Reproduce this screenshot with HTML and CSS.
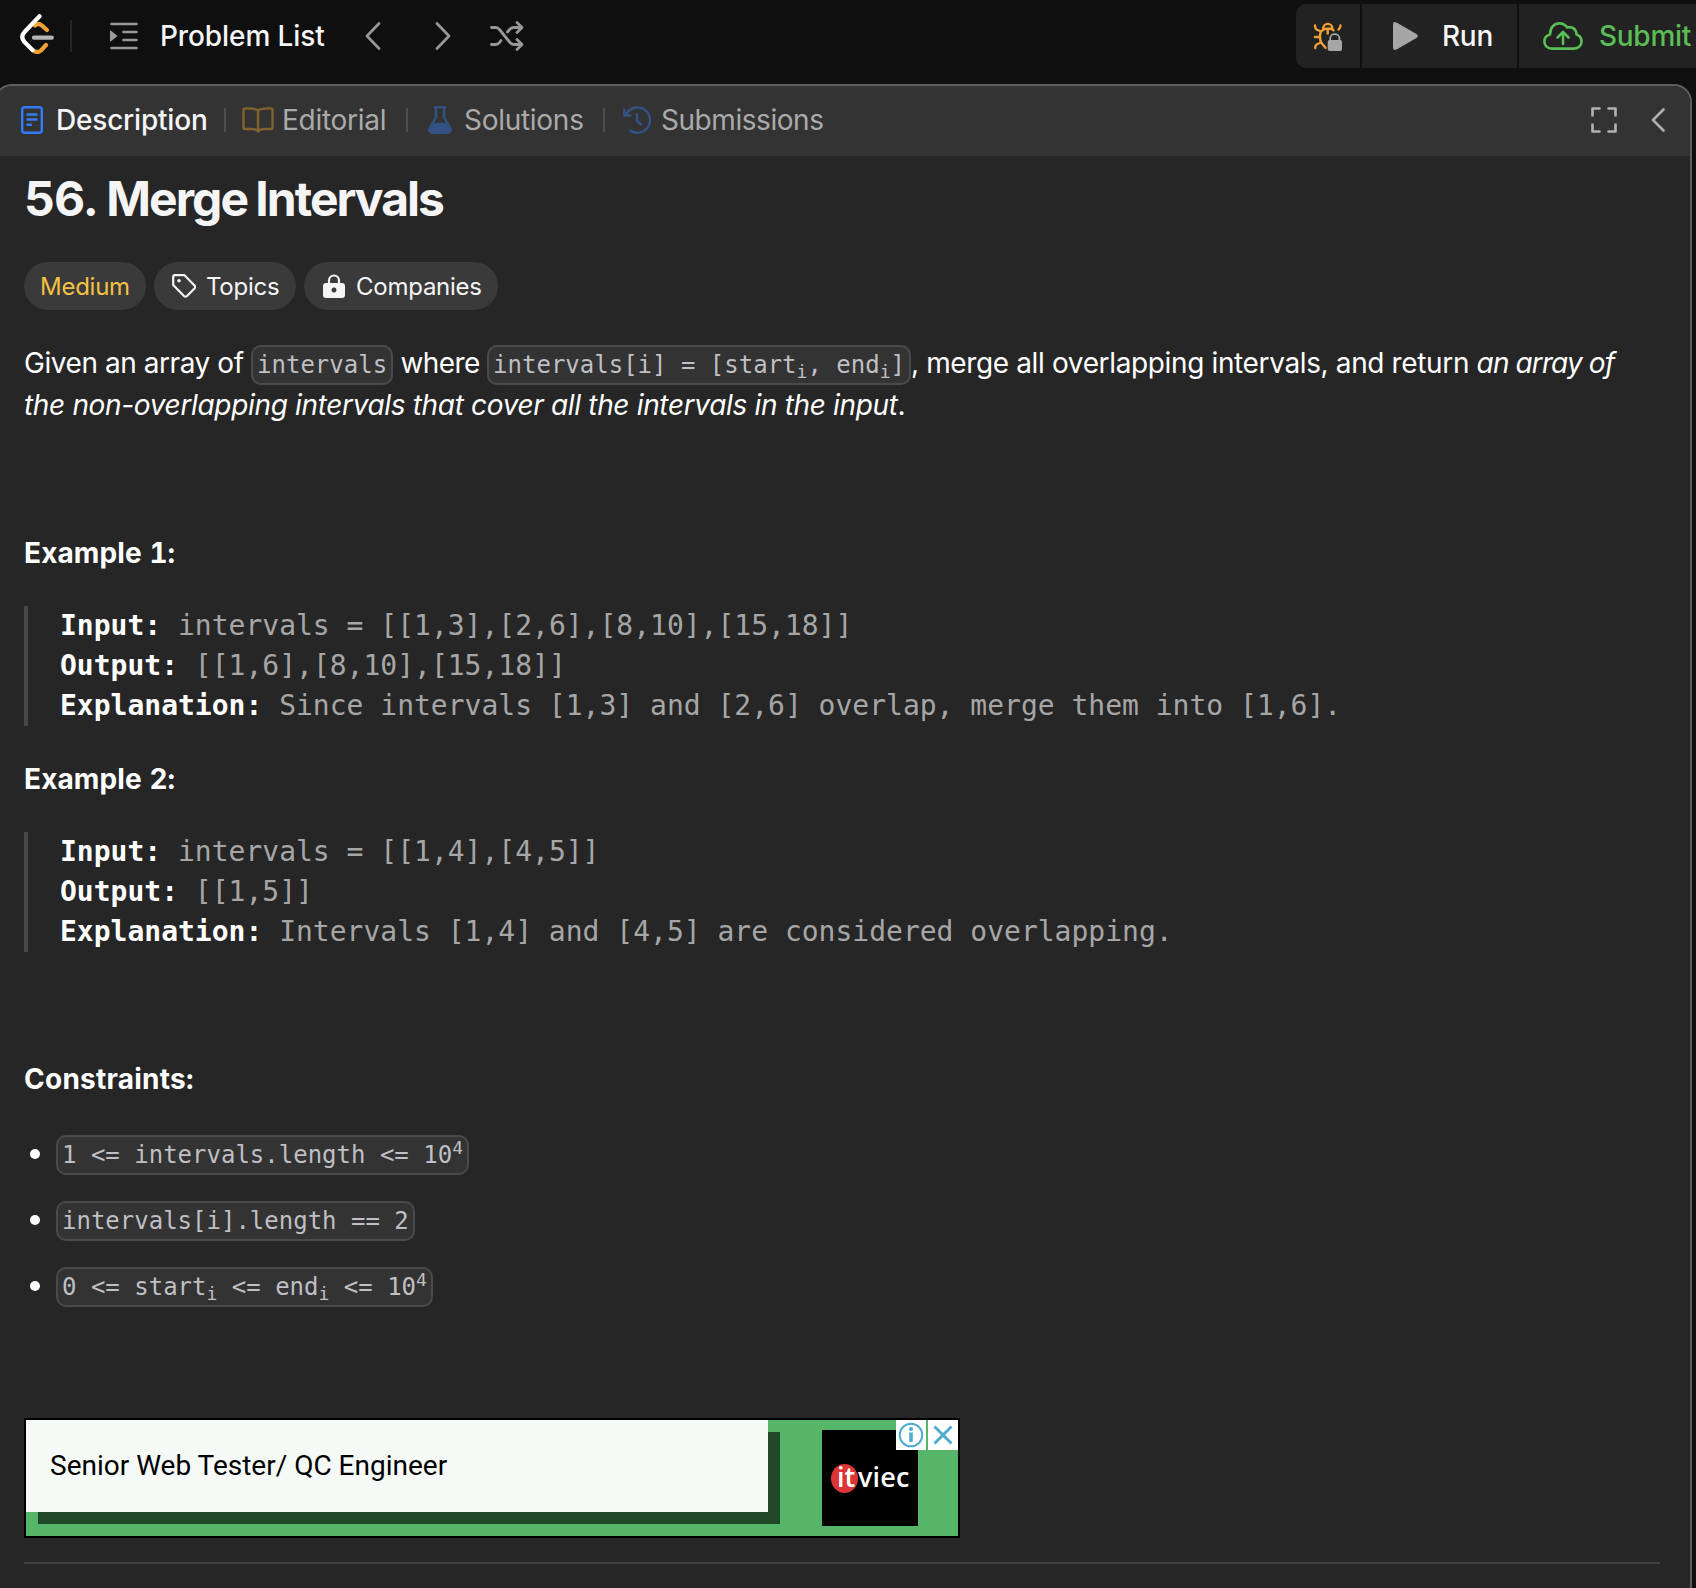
FILE: index.html
```html
<!DOCTYPE html>
<html lang="en">
<head>
<meta charset="utf-8">
<title>56. Merge Intervals</title>
<link rel="stylesheet" href="styles.css">
</head>
<body>
<header class="topbar">
  <svg class="logo" width="34" height="40" viewBox="0 0 34 40" fill="none" stroke-linecap="round" stroke-linejoin="round" stroke-width="4.200">
    <path d="M15 11.500q3.500-3 7 .200L27 16" stroke="#f0a035"/>
    <path d="M13 36.500q4.500 3 8 0L26 31" stroke="#f0a035"/>
    <path d="M14 23.700h17.800" stroke="#b3b3b3"/>
    <path d="M19.500 2.200 4.500 18q-4.500 5 0 10L12.500 36" stroke="#fff"/>
  </svg>
  <i class="logo-divider"></i>
  <svg class="list-icon" width="28" height="28" viewBox="0 0 28 28" fill="none" stroke="#999" stroke-width="2.600" stroke-linecap="round">
    <path d="M1.500 2h25M13.500 10h13M13.500 18h13M1.500 26h25"/><path d="M0 8.500v11q1 0 2-1l5.500-4.500L2 9.500q-1-1-2-1z" fill="#999" stroke="none"/>
  </svg>
  <span class="list-name">Problem List</span>
  <svg class="prev" width="16" height="28" viewBox="0 0 16 28" fill="none" stroke="#999" stroke-width="2.600" stroke-linecap="round" stroke-linejoin="round"><path d="M14 1.500 2 14l12 12.500"/></svg>
  <svg class="next" width="16" height="28" viewBox="0 0 16 28" fill="none" stroke="#999" stroke-width="2.600" stroke-linecap="round" stroke-linejoin="round"><path d="M2 1.500 14 14 2 26.500"/></svg>
  <svg class="shuffle" width="34" height="30" viewBox="0 0 34 30" fill="none" stroke="#999" stroke-width="2.800" stroke-linecap="round" stroke-linejoin="round">
    <path d="M1.500 6.500h4q2.500 0 4 2L20 21.500q1.700 2 4 2h7M1.500 23.500h4q2.500 0 4-2l1.500-2M17.500 11l2.500-3q1.700-1.500 4-1.500h7M27 1.500l5 5-5 5M27 18.500l5 5-5 5"/>
  </svg>
  <div class="actions">
    <div class="debug">
      <svg width="30" height="30" viewBox="0 0 30 30" fill="none" stroke="#f0a035" stroke-width="2.400" stroke-linecap="round" stroke-linejoin="round">
        <path d="M10.200 7.500a4.600 4.600 0 0 1 9.200 0M2 4.500q0 3.500 2.500 4.500l3.500 1.500Q10 8 13 7.800h5l2.500 1.500M14.700 8v4.500M8 10.500q-1 2-1 5.500t1.500 6M2 16h5M8 21.500l-3.500 1.500Q2.200 24 2.200 27M8.500 22l4 4.800M27.500 4.500q0 2.500-2 4"/>
        <path d="M17.200 20.500v-3.200a4.600 4.200 0 0 1 9.200 0v3.200" stroke="#a6a6a6" stroke-width="1.800"/>
        <rect x="14.700" y="19" width="14.300" height="11" rx="2" fill="#a6a6a6" stroke="none"/>
      </svg>
    </div>
    <div class="run">
      <svg width="26" height="28" viewBox="0 0 26 28"><path d="M0 2.500Q0-1 3.500 .500L23.500 12q2.500 2 0 4L3.500 27.500Q0 29 0 25.500z" fill="#a6a6a6"/></svg>
      <span>Run</span>
    </div>
    <div class="submit">
      <svg width="40" height="28" viewBox="0 0 40 28" fill="none" stroke="#5bbd55" stroke-width="2.600" stroke-linecap="round" stroke-linejoin="round"><path d="M9 26.600c-4.500 0-7.600-3-7.600-7 0-3.500 2-6 5.600-7C7 5.500 11 1.400 16.500 1.400c3.500 0 6 1.500 7.700 4.100 5-1.500 9 1.500 9.300 7 3 1 5 3.600 5 7 0 4-3 7.100-7.500 7.100zM20 22V10.500M14.500 15.500 20 10l5.500 5.500"/></svg>
      <span>Submit</span>
    </div>
  </div>
</header>
<main class="panel">
  <nav class="tabs">
    <div class="tab active t1">
      <svg width="22" height="28" viewBox="0 0 22 28" fill="none" stroke="#347bf5" stroke-width="2.400" stroke-linecap="round"><rect x="1.200" y="1.200" width="19.600" height="25.600" rx="2.500"/><path d="M6.500 8.500h9M6.500 13.500h9M6.500 18.700h3.500"/></svg>
      <span>Description</span>
    </div>
    <div class="tab t2">
      <svg width="32" height="26" viewBox="0 0 32 26" fill="none" stroke="#80632f" stroke-width="2.400" stroke-linejoin="round"><path d="M16 3.500Q12 1 3 1.500q-1.500 0-1.500 1.500v17.500q0 1.500 1.500 1.500h8q3 0 5 2.500 2-2.500 5-2.500h8q1.500 0 1.500-1.500V3q0-1.500-1.500-1.500-9-.500-13 2zV24"/></svg>
      <span>Editorial</span>
    </div>
    <div class="tab t3">
      <svg width="24" height="28" viewBox="0 0 24 28" fill="none" stroke="#345183" stroke-width="2.400" stroke-linecap="round" stroke-linejoin="round"><path d="M6.500 1.300h11M8 1.500v10L2 21.500q-2 5 2.500 5.200h15q4.500-.200 2.500-5.200L16 11.500v-10"/><path d="M6 18h12l3.500 6q0 2.500-3 2.500h-13q-3 0-3-2.500z" fill="#345183"/></svg>
      <span>Solutions</span>
    </div>
    <div class="tab t4">
      <svg width="28" height="28" viewBox="0 0 28 28" fill="none" stroke="#345183" stroke-width="2.400" stroke-linecap="round" stroke-linejoin="round"><path d="M3 8.500A12.700 12.700 0 1 1 7 24.500M14 8v7l4 3.500M1.200 3.500V9.500H7.500"/></svg>
      <span>Submissions</span>
    </div>
    <div class="panel-tools">
      <svg width="26" height="26" viewBox="0 0 26 26" fill="none" stroke="#b0b0b0" stroke-width="2.600" stroke-linecap="round" stroke-linejoin="round"><path d="M1.500 8.500v-7h7M17.500 1.500h7v7M24.500 17.500v7h-7M8.500 24.500h-7v-7"/></svg>
      <svg width="14" height="24" viewBox="0 0 14 24" fill="none" stroke="#b0b0b0" stroke-width="2.600" stroke-linecap="round" stroke-linejoin="round"><path d="M12.500 1.500 2 12l10.500 10.500"/></svg>
    </div>
  </nav>
  <article class="content">
    <h1><span class="number">56.</span> Merge Intervals</h1>
    <div class="pills">
      <span class="pill medium">Medium</span>
      <span class="pill topics"><svg width="24" height="24" viewBox="0 0 24 24" fill="none" stroke="#f5f5f5" stroke-width="2.200" stroke-linejoin="round"><path d="M1.200 3v8L12 22q1.500 1.400 3 0l7.500-7.500q1.400-1.500 0-3L12.500 1.200H3Q1.200 1.200 1.200 3z"/><circle cx="7" cy="6.800" r="1.800" fill="#f5f5f5" stroke="none"/></svg>Topics</span>
      <span class="pill companies"><svg width="22" height="24" viewBox="0 0 22 24"><path d="M6 11V6.500a5 5 0 0 1 10 0V11" fill="none" stroke="#f5f5f5" stroke-width="2.200"/><path fill="#f5f5f5" fill-rule="evenodd" d="M3 9h16q3 0 3 3v9q0 3-3 3H3q-3 0-3-3v-9q0-3 3-3zm8 4.500a2.500 2.500 0 1 0 .01 0z"/></svg>Companies</span>
    </div>
    <p class="statement"><span class="given">Given an array of </span><code>intervals</code><span class="where"> where </span><code>intervals[i] = [start<sub>i</sub>, end<sub>i</sub>]</code><span class="task">, merge all overlapping intervals, and return </span><em class="result">an array of</em><br><em class="cover">the non-overlapping intervals that cover all the intervals in the input</em>.</p>
    <p class="heading ex1"><strong>Example 1:</strong></p>
<pre><b>Input:</b> intervals = [[1,3],[2,6],[8,10],[15,18]]
<b>Output:</b> [[1,6],[8,10],[15,18]]
<b>Explanation:</b> Since intervals [1,3] and [2,6] overlap, merge them into [1,6].
</pre>
    <p class="heading ex2"><strong>Example 2:</strong></p>
<pre><b>Input:</b> intervals = [[1,4],[4,5]]
<b>Output:</b> [[1,5]]
<b>Explanation:</b> Intervals [1,4] and [4,5] are considered overlapping.
</pre>
    <p class="heading constraints"><strong>Constraints:</strong></p>
    <ul>
      <li><code>1 &lt;= intervals.length &lt;= 10<sup>4</sup></code></li>
      <li><code>intervals[i].length == 2</code></li>
      <li><code>0 &lt;= start<sub>i</sub> &lt;= end<sub>i</sub> &lt;= 10<sup>4</sup></code></li>
    </ul>
    <aside class="ad">
      <div class="ad-card">Senior Web Tester/ QC Engineer</div>
      <div class="brand"><span class="it">it</span><span class="viec">viec</span></div>
      <div class="ad-tools">
        <svg width="30" height="30" viewBox="0 0 30 30" fill="none" stroke="#4fabd0" stroke-width="2"><circle cx="15" cy="15" r="11.300"/><path d="M15 12.500V22" stroke-width="3.600"/><circle cx="15" cy="9" r="2.100" fill="#4fabd0" stroke="none"/></svg>
        <svg width="30" height="30" viewBox="0 0 30 30" fill="none" stroke="#4fabd0" stroke-width="3"><path d="M6.500 6.500l17 17M23.500 6.500l-17 17"/></svg>
      </div>
    </aside>
    <hr>
  </article>
</main>
</body>
</html>
```
FILE: styles.css
```css
* { box-sizing: border-box; }
body {
  margin: 0;
  height: 1588px;
  overflow: hidden;
  background: #0f0f0f;
  color: #f5f5f5;
  font-family: Inter, "Liberation Sans", sans-serif;
  font-size: 28px;
}
svg { display: block; flex: none; }
span, em, strong { white-space: nowrap; }

.topbar { display: flex; align-items: center; height: 84px; padding: 0 0 12px 20px; font-weight: 500; }
.logo { margin-bottom: 4px; }
.logo-divider { width: 2px; height: 32px; margin-left: 16px; background: #252525; }
.list-icon { margin-left: 38px; }
.list-name { width: 164px; margin-left: 22px; letter-spacing: -0.1px; }
.prev { margin-left: 41px; }
.next { margin-left: 54px; }
.shuffle { margin-left: 39px; }
.actions { display: flex; flex: none; gap: 2px; width: 400px; height: 64px; margin-left: auto; border-radius: 10px 0 0 10px; overflow: hidden; letter-spacing: -0.28px; }
.actions > div { display: flex; align-items: center; background: #222; }
.debug { width: 64px; padding-left: 17px; }
.run { width: 155px; padding-left: 31px; gap: 23px; }
.submit { flex: 1; padding-left: 24px; gap: 16px; color: #5bbd55; }

.panel { width: 1698px; height: 1520px; margin-left: -6px; border: 2px solid #5e5e5e; border-radius: 18px; background: #262626; overflow: hidden; }
.tabs { display: flex; align-items: center; height: 70px; padding: 0 0 2px 25px; background: #333; color: #aaa; letter-spacing: -0.28px; }
.tab { display: flex; align-items: center; }
.tab + .tab::before { content: ""; width: 2px; height: 24px; background: #4d4d4d; }
.tab.active { color: #f5f5f5; font-weight: 500; letter-spacing: -0.2px; }
.t1 { width: 203px; gap: 13px; }
.t2 { width: 182px; }
.t2 svg { margin: 0 8px 0 16px; }
.t3 { width: 197px; }
.t3 svg { margin: 0 12px 0 20px; }
.t4 svg { margin: 0 10px 0 18px; }
.t4 span { letter-spacing: -0.45px; }
.panel-tools { display: flex; align-items: center; gap: 34px; margin-left: auto; margin-right: 25px; }

.content { padding: 0 30px 0 28px; color: #fff; }
h1 { height: 58px; margin: 14px 0 34px; font-size: 48px; line-height: 58px; font-weight: 700; letter-spacing: -1.98px; word-spacing: -1.1px; color: #f5f5f5; }
.number { letter-spacing: -0.8px; }
.pills { display: flex; gap: 8px; height: 48px; font-size: 24px; letter-spacing: -0.25px; color: #f5f5f5; }
.pill { display: flex; align-items: center; height: 48px; padding-left: 16px; border-radius: 24px; background: #3a3a3a; }
.medium { width: 122px; color: #f2c044; }
.topics { width: 142px; padding-left: 18px; gap: 10px; }
.companies { width: 194px; padding-left: 19px; gap: 11px; }

p { margin: 0; line-height: 42px; }
.statement { height: 84px; margin-top: 32px; white-space: nowrap; }
.given { letter-spacing: -0.44px; }
.where { letter-spacing: -0.56px; }
.task { letter-spacing: -0.365px; }
.result { letter-spacing: -0.9px; }
.cover { letter-spacing: -0.34px; }
code { padding: 4px; border: 2px solid #4a4a4a; border-radius: 10px; background: #333; color: #bfbfc4; font: 24px/1 "DejaVu Sans Mono", monospace; white-space: pre; }
sub, sup { position: relative; font-size: 75%; line-height: 0; vertical-align: baseline; }
sub { bottom: -0.25em; }
sup { top: -0.5em; }
.heading { height: 42px; font-variant-numeric: tabular-nums; letter-spacing: 0.12px; }
.ex1 { margin-top: 106px; }
.ex2 { margin-top: 32px; }
.constraints { margin-top: 106px; letter-spacing: 0.25px; }
pre { height: 120px; margin: 32px 0 0; padding-left: 32px; border-left: 4px solid #484848; color: #a6a6a6; font: 28px/40px "DejaVu Sans Mono", monospace; }
pre b { color: #fff; }
ul { margin: 34px 0 0; padding: 0; list-style: none; }
li { display: flex; align-items: center; height: 42px; margin-bottom: 24px; }
li::before { content: ""; width: 10px; height: 10px; margin: 0 16px 3px 6px; border-radius: 50%; background: #fff; }
li code { height: 40px; line-height: 28px; }

.ad { position: relative; display: flex; width: 936px; height: 120px; margin-top: 110px; border: 2px solid #000; background: #56b568; }
.ad-card { display: flex; align-items: center; width: 742px; height: 92px; padding: 0 0 2px 24px; background: #f6faf7; box-shadow: 12px 12px 0 #20492a; color: #000; font: 28px Roboto, sans-serif; }
.brand { display: flex; align-items: center; width: 96px; height: 96px; margin: 10px 0 0 54px; padding-left: 9px; background: #000; color: #fff; font: 600 27px "Open Sans", sans-serif; }
.it { width: 27px; height: 29px; padding-left: 6px; border-radius: 50%; background: #dc3538; line-height: 25px; }
.viec { margin-bottom: 4px; line-height: 25px; letter-spacing: 0.2px; }
.ad-tools { position: absolute; top: 0; right: 0; display: flex; gap: 2px; }
.ad-tools svg { background: #fff; }
hr { width: 1636px; height: 2px; margin: 24px 0 0; border: 0; background: #414141; }
```
